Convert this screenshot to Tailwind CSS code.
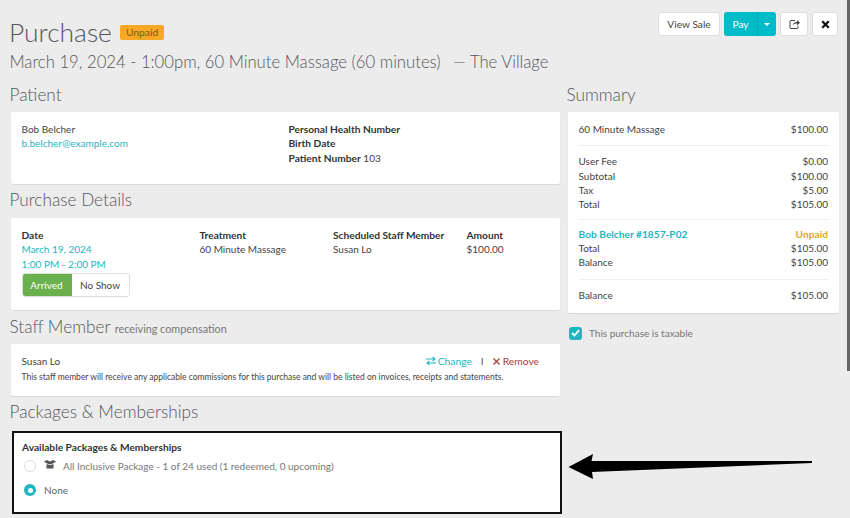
<!DOCTYPE html>
<html>
<head>
<meta charset="utf-8">
<script src="https://cdn.jsdelivr.net/npm/@tailwindcss/browser@4"></script>
</head>
<body class="relative h-[518px] w-[850px] overflow-hidden bg-[#ececec] font-['Lato','Liberation_Sans',sans-serif] text-[10px] leading-[14.33px] text-[#444]">
<div class="absolute right-[0px] top-0 h-[371px] w-[3px] bg-[#666]"></div>

<header class="relative h-[81px] px-[10px]">
  <div class="flex items-center pt-[15px]">
    <h1 class="-ml-[1px] text-[26.4px] leading-[34px] font-light text-[#55575e]">Purchase</h1>
    <span class="ml-[8px] mt-[1px] rounded-[2px] bg-[#f9a825] px-[6px] py-[1px] text-[10.3px] leading-[13px] text-[#7a5a1a]">Unpaid</span>
  </div>
  <p class="-ml-[0.5px] mt-[1px] text-[16.7px] leading-[24px] font-light text-[#55575e]">March 19, 2024 - 1:00pm, 60 Minute Massage (60 minutes) <span class="ml-[3px]">&nbsp;— The Village</span></p>
  <div class="absolute right-[12px] top-[12px] flex gap-[4px]">
    <button class="h-[24px] w-[62px] rounded-[3px] border border-[#ddd] bg-white text-[10.2px] text-[#444]">View Sale</button>
    <div class="flex h-[24px] w-[52px] overflow-hidden rounded-[3px] bg-[#00bcc8] text-white">
      <button class="w-[34px] border-r border-[#00aab5] text-[10.2px]">Pay</button>
      <button class="flex flex-1 items-center justify-center"><span class="mt-[1px] block h-0 w-0 border-x-[3px] border-t-[3px] border-x-transparent border-t-white"></span></button>
    </div>
    <button class="flex h-[24px] w-[28px] items-center justify-center rounded-[3px] border border-[#ddd] bg-white">
      <svg width="11" height="10" viewBox="0 0 11 10" fill="none" stroke="#444" stroke-width="1"><path d="M6 1.500H2a1 1 0 0 0-1 1v6a1 1 0 0 0 1 1h6a1 1 0 0 0 1-1V7"/><path d="M3.500 6.500C4 4 6 3 8 3V1l3 2.800-3 2.600V4.600C6 4.600 4.500 5 3.500 6.500Z" fill="#444" stroke="none"/></svg>
    </button>
    <button class="flex h-[24px] w-[26px] items-center justify-center rounded-[3px] border border-[#ddd] bg-white">
      <svg width="9" height="9" viewBox="0 0 9 9" stroke="#111" stroke-width="2.300"><path d="M1.200 1.200l6.600 6.600M7.800 1.200L1.200 7.800"/></svg>
    </button>
  </div>
</header>

<main class="flex gap-[7.5px] pl-[10.5px]">
  <div class="w-[549.5px]">
    <h2 class="-ml-[1px] h-[31px] text-[17.2px] leading-[28px] font-light text-[#55575e]">Patient</h2>
    <section class="flex h-[72px] rounded-[2px] bg-white px-[11px] py-[10px] shadow-[0_1px_1px_rgba(0,0,0,0.08)]">
      <div class="w-[267px]">
        <div>Bob Belcher</div>
        <div class="text-[#1fb6c1]">b.belcher@example.com</div>
      </div>
      <div class="text-[10.2px]">
        <div class="font-bold text-[#333]">Personal Health Number</div>
        <div class="font-bold text-[#333]">Birth Date</div>
        <div><b class="font-bold text-[#333]">Patient Number</b> <span class="text-[10px]">103</span></div>
      </div>
    </section>

    <h2 class="-ml-[1px] h-[34px] text-[17.2px] leading-[32px] font-light text-[#55575e]">Purchase Details</h2>
    <section class="flex h-[92px] rounded-[2px] bg-white px-[11px] py-[10px] shadow-[0_1px_1px_rgba(0,0,0,0.08)]">
      <div class="w-[178px]">
        <div class="text-[10.2px] font-bold text-[#333]">Date</div>
        <div class="text-[#1fb6c1]">March 19, 2024</div>
        <div class="text-[#1fb6c1]">1:00 PM - 2:00 PM</div>
        <div class="mt-[2px] flex h-[24px] w-[108px] overflow-hidden rounded-[3px] border border-[#ddd]">
          <span class="-m-[1px] mr-0 flex w-[50px] items-center justify-center bg-[#6ab04c] text-white">Arrived</span>
          <span class="flex flex-1 items-center justify-center bg-white">No Show</span>
        </div>
      </div>
      <div class="w-[133.5px]">
        <div class="text-[10.2px] font-bold text-[#333]">Treatment</div>
        <div>60 Minute Massage</div>
      </div>
      <div class="w-[133.5px]">
        <div class="text-[10.2px] font-bold text-[#333]">Scheduled Staff Member</div>
        <div>Susan Lo</div>
      </div>
      <div>
        <div class="text-[10.2px] font-bold text-[#333]">Amount</div>
        <div>$100.00</div>
      </div>
    </section>

    <h2 class="-ml-[1px] h-[34px] text-[17.2px] leading-[33px] font-light text-[#55575e]">Staff Member <small class="text-[10.8px] font-normal text-[#777]">receiving compensation</small></h2>
    <section class="h-[52px] rounded-[2px] bg-white px-[11px] pt-[10px] shadow-[0_1px_1px_rgba(0,0,0,0.08)]">
      <div class="flex items-center justify-between pr-[10px]">
        <span>Susan Lo</span>
        <span class="flex items-center">
          <svg class="mr-[2px]" width="10" height="10" viewBox="0 0 10 10" fill="none" stroke="#1fb6c1" stroke-width="1.100"><path d="M0 3h8.500M6.500 .8L9 3 6.500 5.200M10 7H1.500M3.500 4.800L1 7l2.500 2.200"/></svg>
          <span class="text-[10.3px] text-[#1fb6c1]">Change</span>
          <span class="mx-[9px] text-[#555]">I</span>
          <svg class="mr-[3px]" width="7" height="7" viewBox="0 0 7 7" stroke="#a83a32" stroke-width="1.200"><path d="M.5 .5l6 6M6.500 .5l-6 6"/></svg>
          <span class="text-[10.3px] text-[#a83a32]">Remove</span>
        </span>
      </div>
      <p class="mt-[2px] text-[8.5px] leading-[14px] text-[#444]">This staff member will receive any applicable commissions for this purchase and will be listed on invoices, receipts and statements.</p>
    </section>

    <h2 class="-ml-[1px] h-[35px] text-[17.2px] leading-[31px] font-light text-[#55575e]">Packages &amp; Memberships</h2>
    <section class="ml-[1.5px] h-[83px] w-[550px] border-2 border-[#111] bg-white px-[8px] pt-[7px]">
      <div class="text-[10.2px] font-bold text-[#333]">Available Packages &amp; Memberships</div>
      <div class="mt-[2px] flex h-[20px] items-center text-[#777]">
        <span class="ml-[2px] h-[12px] w-[12px] rounded-full border border-[#ddd] bg-white"></span>
        <svg class="mb-[3px] ml-[8px]" width="12" height="9" viewBox="0 0 12 9" fill="#555"><path d="M2.500 4V8.500H9.500V4L6 5.300ZM0 1.500L3 0 6 1.500 9 0 12 1.500 9.500 3.300 6 4.500 2.500 3.300Z"/></svg>
        <span class="ml-[7px]">All Inclusive Package - 1 of 24 used (1 redeemed, 0 upcoming)</span>
      </div>
      <div class="mt-[4px] flex h-[20px] items-center text-[#666]">
        <span class="ml-[2px] flex h-[12px] w-[12px] items-center justify-center rounded-full bg-[#1fb6c1]"><span class="h-[5px] w-[5px] rounded-full bg-white"></span></span>
        <span class="ml-[8px]">None</span>
      </div>
    </section>
  </div>

  <aside class="w-[271.500px]">
    <h2 class="-ml-[1px] h-[31px] text-[17.2px] leading-[28px] font-light text-[#55575e]">Summary</h2>
    <section class="h-[201px] rounded-[2px] bg-white px-[11px] py-[10px] shadow-[0_1px_1px_rgba(0,0,0,0.08)]">
      <div class="flex justify-between"><span>60 Minute Massage</span><span>$100.00</span></div>
      <div class="mb-[8px] mt-[9px] border-t border-[#eee]"></div>
      <div class="flex justify-between"><span>User Fee</span><span>$0.00</span></div>
      <div class="flex justify-between"><span>Subtotal</span><span>$100.00</span></div>
      <div class="flex justify-between"><span>Tax</span><span>$5.00</span></div>
      <div class="flex justify-between"><span>Total</span><span>$105.00</span></div>
      <div class="mb-[7px] mt-[7px] border-t border-[#eee]"></div>
      <div class="flex justify-between text-[10.2px] font-bold"><span class="text-[#1fb6c1]">Bob Belcher #1857-P02</span><span class="text-[#e5a32b]">Unpaid</span></div>
      <div class="flex justify-between"><span>Total</span><span>$105.00</span></div>
      <div class="flex justify-between"><span>Balance</span><span>$105.00</span></div>
      <div class="mb-[8px] mt-[9px] border-t border-[#eee]"></div>
      <div class="flex justify-between"><span>Balance</span><span>$105.00</span></div>
    </section>
    <div class="mt-[13px] flex items-center text-[#777]">
      <span class="ml-[1.5px] flex h-[13px] w-[13px] items-center justify-center rounded-[3px] bg-[#1fb6c1]">
        <svg width="9" height="8" viewBox="0 0 9 8" fill="none" stroke="#fff" stroke-width="1.800"><path d="M1 4l2.500 2.500L8 1.200"/></svg>
      </span>
      <span class="ml-[7px]">This purchase is taxable</span>
    </div>
  </aside>
</main>

<svg class="absolute left-[560px] top-[445px]" width="260" height="40" viewBox="0 0 260 40">
  <path d="M8.500 22L33 9 31.500 16 252 16 252 18 32 27 33 34Z" fill="#000"/>
</svg>
</body>
</html>
